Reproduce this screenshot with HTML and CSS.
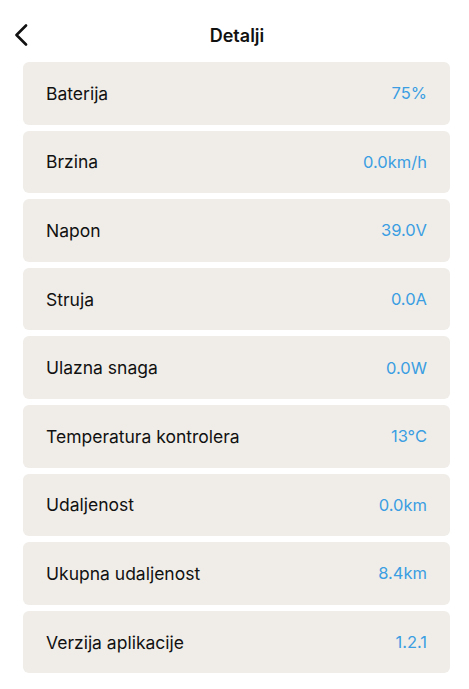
FILE: index.html
```html
<!DOCTYPE html>
<html lang="hr">
    <head>
        <meta name="viewport" content="width=device-width, initial-scale=1.0">
        <title>Detalji</title>
        <link rel="stylesheet" href="styles.css">
    </head>
    <body>
        <div class="details">
            <div class="details__header">
                <button class="details__back" aria-label="Natrag">
                    <svg width="14" height="22" viewBox="0 0 14 22">
                        <path d="M12 1.5 L2.5 11 L12 20.5" fill="none" stroke="#111" stroke-width="2.6" stroke-linecap="round" stroke-linejoin="round"/>
                    </svg>
                </button>
                <div class="details__title">Detalji</div>
            </div>
            <div class="details__list">
                <div class="row"><span class="row__label">Baterija</span><span class="row__value">75%</span></div>
                <div class="row"><span class="row__label">Brzina</span><span class="row__value">0.0km/h</span></div>
                <div class="row"><span class="row__label">Napon</span><span class="row__value">39.0V</span></div>
                <div class="row"><span class="row__label">Struja</span><span class="row__value">0.0A</span></div>
                <div class="row"><span class="row__label">Ulazna snaga</span><span class="row__value">0.0W</span></div>
                <div class="row"><span class="row__label">Temperatura kontrolera</span><span class="row__value">13°C</span></div>
                <div class="row"><span class="row__label">Udaljenost</span><span class="row__value">0.0km</span></div>
                <div class="row"><span class="row__label">Ukupna udaljenost</span><span class="row__value">8.4km</span></div>
                <div class="row"><span class="row__label">Verzija aplikacije</span><span class="row__value">1.2.1</span></div>
            </div>
        </div>
    </body>
</html>
```

FILE: styles.css
```css
body {
    margin: 0;
    background: #fff;
    font-family: Inter, "Noto Sans", sans-serif;
    color: #111;
}
.details__header {
    position: relative;
    height: 62px;
    display: flex;
    align-items: center;
    justify-content: center;
}
.details__back {
    position: absolute;
    left: 14px;
    top: 24px;
    padding: 0;
    border: none;
    background: none;
    line-height: 0;
}
.details__title {
    margin-left: 5px;
    margin-top: 8px;
    font-size: 18px;
    font-weight: 600;
}
.details__list {
    display: flex;
    flex-direction: column;
    gap: 6px;
    margin: 0 19px 0 23px;
}
.row {
    display: flex;
    align-items: center;
    justify-content: space-between;
    height: 62.6px;
    padding: 0 23px;
    border-radius: 6px;
    background-color: #f0ede8;
    font-size: 17.5px;
}
.row__value {
    color: #3b9ee2;
    font-size: 16.5px;
}
```
